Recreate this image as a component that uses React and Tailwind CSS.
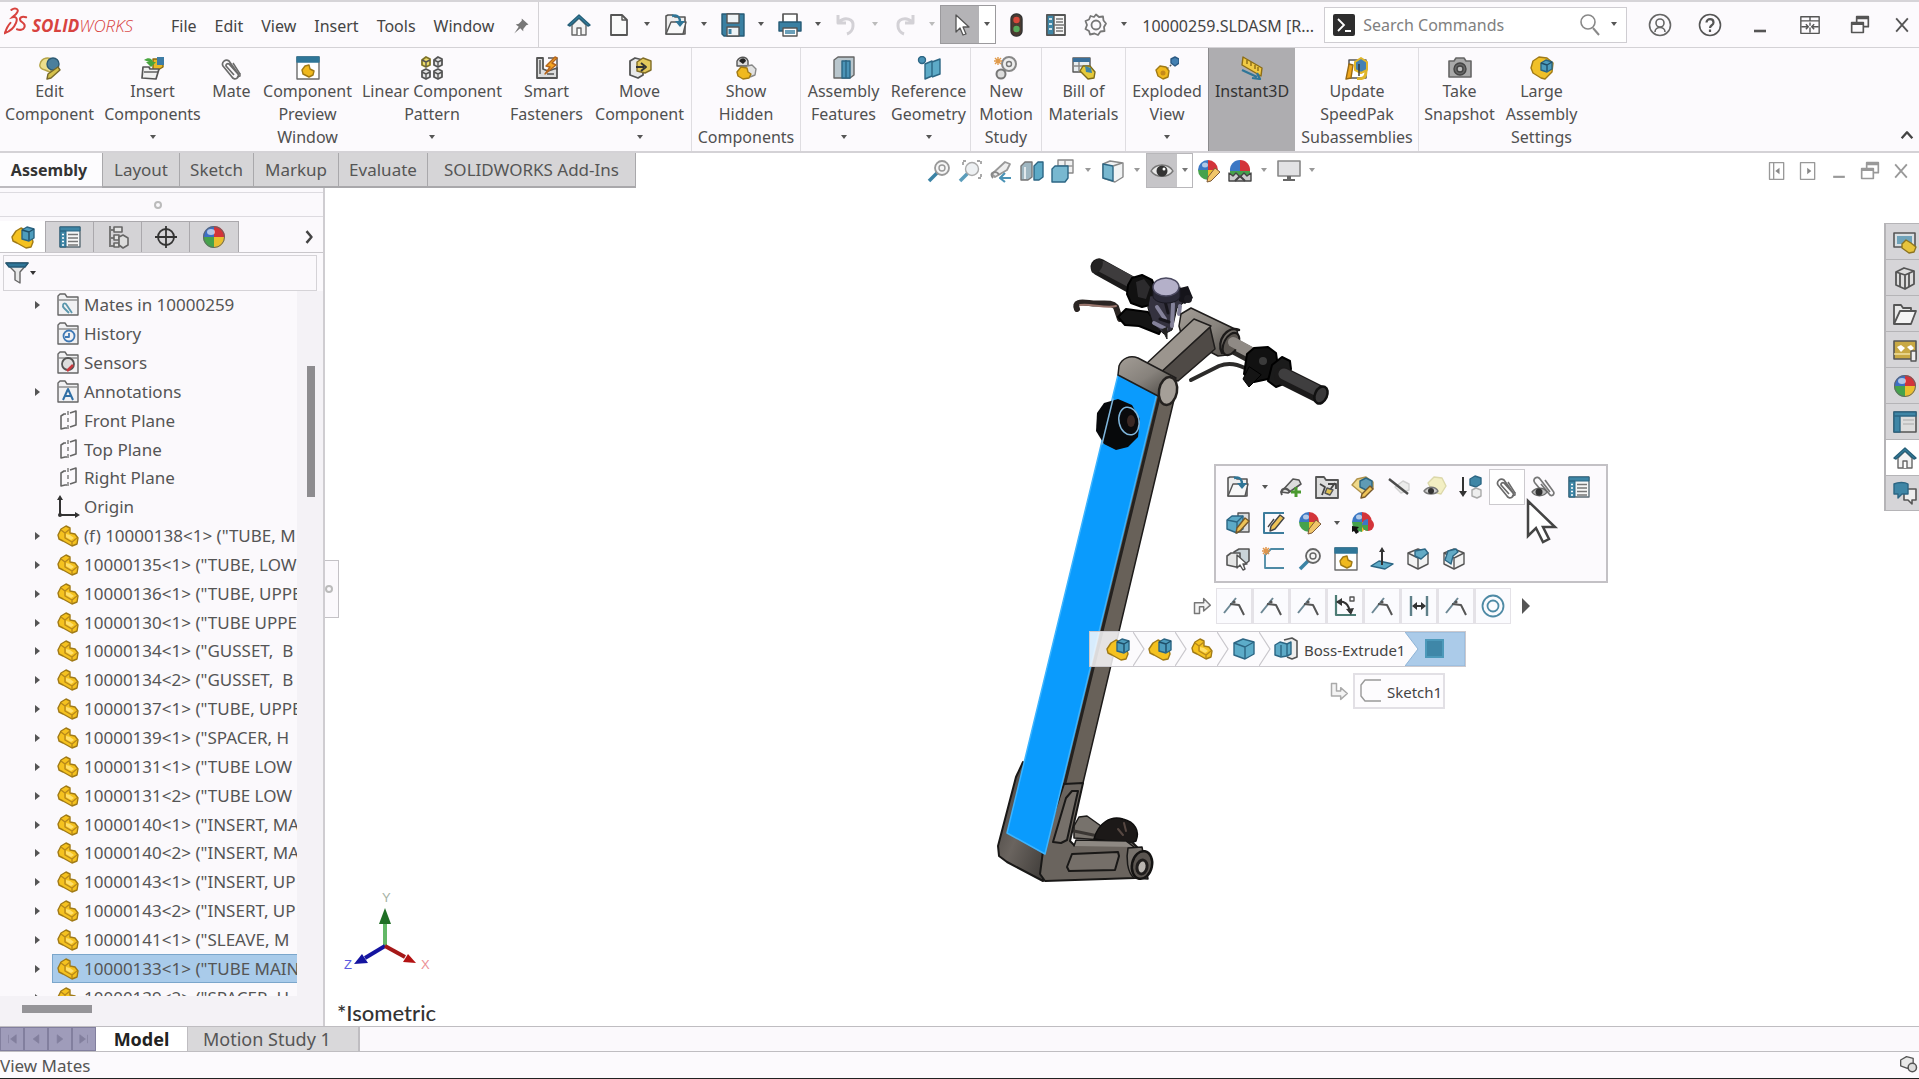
import React from "react";

/* ---------- icon drawing helpers ---------- */

const Svg = ({ className = "size-6", children }) => (
  <svg viewBox="0 0 24 24" className={`${className} shrink-0`} fill="none" stroke="#555" strokeWidth="1.4" strokeLinejoin="round" aria-hidden="true">
    {children}
  </svg>
);

const Part = ({ className }) => (
  <Svg className={className}>
    <path d="M2 11 5 5l5-3 4 2v5l5 1 3 4-1 6-5 2-9-5-4-2z" fill="#f5c21f" stroke="#a07a16" />
    <path d="m5 6 4 3 5-4M9 9v5l7 4 5-4M16 18v3" stroke="#b8891a" />
    <path d="m10 10 4 1 4 3-3 2-5-3z" fill="#ffe06a" stroke="none" />
  </Svg>
);

const Asm = ({ className }) => (
  <Svg className={className}>
    <path d="M1 12 5 6l5-3 4 2 1 6 6 2 1 4-2 5-5 1-9-5-4-2z" fill="#f5c21f" stroke="#a07a16" />
    <path d="m11 5 5-3 7 2v9l-5 3-7-2z" fill="#4e9dbd" stroke="#2b6583" />
    <path d="m11 5 7 2 5-3M18 7v8" stroke="#1f4f69" />
  </Svg>
);

const Clip = ({ className }) => (
  <Svg className={className}>
    <path d="M19 19 9 5a4 4 0 0 0-6 5l9 11a3 3 0 0 0 6-3L9 8a2 2 0 0 0-3 2l8 9" stroke="#6b6b6b" strokeWidth="1.7" />
    <path d="m20 18-7-11M17 21l3-1v-3" stroke="#6b6b6b" strokeWidth="1.5" />
  </Svg>
);

const Home = ({ className }) => (
  <Svg className={className}>
    <path d="M5 12v10h14V12L12 5z" fill="#f3f3f3" stroke="#666" />
    <path d="M10 22v-7h4v7" fill="#fff" stroke="#666" />
    <path d="M1 12 12 2l11 10-2 1-9-8-9 8z" fill="#3583a3" stroke="#265f78" />
  </Svg>
);

const Ball = ({ className }) => (
  <Svg className={className}>
    <g stroke="none">
      <path d="M12 12V1A11 11 0 0 0 1 12z" fill="#3c6fc4" />
      <path d="M12 12V1a11 11 0 0 1 11 11z" fill="#d3343a" />
      <path d="M12 12H1a11 11 0 0 0 11 11z" fill="#46a24c" />
      <path d="M12 12h11a11 11 0 0 1-11 11z" fill="#eabf2e" />
      <ellipse cx="9" cy="7" rx="4" ry="3" fill="#fff" opacity=".6" />
    </g>
    <circle cx="12" cy="12" r="10.5" stroke="#666" strokeWidth="1" />
  </Svg>
);

const BallPencil = ({ className, dark }) => (
  <Svg className={className}>
    <g stroke="none">
      <path d="M11 11V1A10 10 0 0 0 1 11z" fill="#3c78c4" />
      <path d="M11 11V1a10 10 0 0 1 10 10z" fill="#d3343a" />
      <path d="M11 11H1a10 10 0 0 0 10 10z" fill="#46a24c" />
      <path d="M11 11h10l-10 10z" fill="#eabf2e" />
      <ellipse cx="8" cy="6" rx="3" ry="2.5" fill="#fff" opacity=".6" />
    </g>
    {dark ? (
      <g stroke="none">
        <circle cx="17" cy="14" r="6" fill="#d3343a" />
        <path d="M17 14v-6a6 6 0 0 0-6 6z" fill="#3c78c4" />
        <path d="M17 14v6a6 6 0 0 1-6-6z" fill="#46a24c" />
        <path d="m1 15 7 1-2 2 2 3-3 2-2-3-2 1z" fill="#111" />
      </g>
    ) : (
      <path d="m18 9 5 4-9 9-4 1 1-5z" fill="#f1c66a" stroke="#7d5a3a" strokeWidth="1" />
    )}
  </Svg>
);

const List = ({ className }) => (
  <Svg className={className}>
    <path d="M2 2h20v20H2z" fill="#f7f7f7" stroke="#5b6b74" />
    <path d="M2 2h20v4H2zM2 6h6v16H2z" fill="#3f86a6" stroke="#2c6684" strokeWidth="1" />
    <path d="M10 9.500h10M10 13h10M10 16.500h10M10 20h10" stroke="#777" />
    <path d="M4 9.500h2M4 13h2M4 16.500h2M4 20h2" stroke="#fff" />
  </Svg>
);

const WinPart = ({ className }) => (
  <Svg className={className}>
    <path d="M1 1h22v22H1z" fill="#fff" stroke="#6b6b6b" />
    <path d="M1 1h22v5H1z" fill="#2f7698" stroke="#2f7698" />
    <path d="m6 14 3-4 4-1 1 4 4 2-1 4-4 2-6-3z" fill="#f0b91e" stroke="#a07a16" />
  </Svg>
);

const Folder = ({ children }) => (
  <Svg className="size-6">
    <path d="M2 22V3l2-2h5l2 3h11v18z" fill="#f1f1f3" stroke="#666" />
    <path d="M2 7h20" stroke="#888" />
    {children}
  </Svg>
);

const Plane = () => (
  <Svg className="size-6">
    <path d="M10 5H8L5 7v13l4-1h2M14 4l6-2v14l-6 2" stroke="#666" strokeWidth="1.600" />
    <path d="M12 2v19" stroke="#777" strokeDasharray="4 3" />
  </Svg>
);

const Open = ({ className }) => (
  <Svg className={className}>
    <path d="M2 21V3l2-1h5l2 2h10v17z" fill="#eee" strokeWidth="1.600" />
    <path d="m2 21 5-12h15l-3 12z" fill="#f8f8f8" />
    <path d="M8 3c6-2 8 2 8 6" stroke="#2f7698" strokeWidth="2.400" />
    <path d="m11 8 10 0-5 6z" fill="#2f7698" stroke="none" />
  </Svg>
);

const MateLines = () => (
  <Svg className="size-6">
    <path d="m2 19 12-15" stroke="#6b8794" strokeWidth="2" />
    <path d="m8 10 9 1 5 10" stroke="#555" strokeWidth="2" />
    <circle cx="12" cy="8" r="1.600" fill="#555" stroke="none" />
  </Svg>
);

const Cube = ({ className, face }) => (
  <Svg className={className}>
    <path d="m2 6 10-4 10 4v11l-10 5-10-5z" fill="#f3f3f3" stroke="#555" />
    <path d="m2 6 10 5 10-5M12 11v11" />
    {face === "top" ? <path d="m9 4 10-2 3 4-7 6-6-3z" fill="#62aac5" stroke="#2c6684" /> : <path d="m3 13 3-9 8-2 2 3-5 4-2 8z" fill="#62aac5" stroke="#2c6684" />}
  </Svg>
);

const BlueCube = () => (
  <Svg className="size-6">
    <path d="m2 6 9-4 11 3v12l-9 5-11-4z" fill="#5cacc9" stroke="#2c6684" />
    <path d="m2 6 11 4 9-5M13 10v12" stroke="#2c6684" />
  </Svg>
);

const Magnifier = ({ className, tone = "#666" }) => (
  <Svg className={className}>
    <path d="m2 22 8-8" stroke="#3b83a5" strokeWidth="3.500" />
    <circle cx="15" cy="9" r="7" fill="#f6f6f6" stroke={tone} strokeWidth="1.800" />
    <circle cx="15" cy="9" r="3" stroke={tone} />
  </Svg>
);

const Caret = ({ className = "", tone = "#555" }) => (
  <svg viewBox="0 0 8 5" className={`w-2 ${className}`} aria-hidden="true">
    <path d="M1 0h6L4 4z" fill={tone} />
  </svg>
);

const Restore = ({ tone = "#555" }) => (
  <Svg className="size-5">
    <path d="M8 8V2h14v12h-6M2 9h14v12H2zM8 4h14M2 11h14" stroke={tone} strokeWidth="2" />
  </Svg>
);

const Close = ({ tone = "#555" }) => (
  <Svg className="size-5">
    <path d="m5 4 14 16M19 4 5 20" stroke={tone} strokeWidth="2.200" />
  </Svg>
);

/* ---------- title bar ---------- */

const Logo = () => (
  <div className="flex w-[158px] shrink-0 items-center pl-1 text-[#d8433f]" aria-label="SOLIDWORKS">
    <svg viewBox="0 0 26 30" className="mb-2 h-7 w-6" fill="none" stroke="#d8433f" strokeWidth="2.200" strokeLinecap="round" aria-hidden="true">
      <path d="M8 3c4-3 9-1 6 3-1 2-4 4-5 5 4-1 6 1 4 6-2 5-6 9-12 11 2-6 4-9 6-11" />
      <path d="M24 11c-5-2-8 1-6 4 2 2 6 3 4 7-1 3-5 3-8 2" />
    </svg>
    <span className="ml-1 pt-0.5 font-['Open_Sans',sans-serif] text-[17px] italic leading-6">
      <b>SOLID</b><span className="font-light">WORKS</span>
    </span>
  </div>
);

const Tool = ({ label, width = "w-10", children }) => (
  <button type="button" aria-label={label} className={`flex ${width} shrink-0 items-center justify-center self-stretch`}>
    {children}
  </button>
);

const Drop = ({ label, tone }) => (
  <button type="button" aria-label={`${label} options`} className="flex w-4 shrink-0 items-center justify-center self-stretch">
    <Caret tone={tone} />
  </button>
);

const QUICK = [
  ["New", <Svg><path d="M4 2h11l5 5v15H4z" fill="#fafafa" strokeWidth="1.800" /><path d="M15 2v5h5" /></Svg>],
  ["Open", <Open />],
  ["Save", <Svg><path d="M1 1h22v22H3l-2-2z" fill="#3a80a2" stroke="#265a75" /><path d="M6 1h12v9H6zM6 14h12v9H6z" fill="#eef3f6" stroke="#555" /><path d="M9 16v5" stroke="#3a80a2" strokeWidth="3" /></Svg>],
  ["Print", <Svg><path d="M5 1h14v9H5z" fill="#fff" strokeWidth="1.700" /><path d="M1 9h22v9H1z" fill="#3a80a2" stroke="#265a75" /><path d="M5 15h14v8H5z" fill="#fff" /><path d="M7 18h10M7 20h10" stroke="#3a80a2" /></Svg>],
  ["Undo", <Svg><path d="M3 2v8h8M4 9c6-6 15-3 14 4 0 4-3 7-6 8" stroke="#d3d1d6" strokeWidth="3" /></Svg>, "#bbb"],
  ["Redo", <Svg><path d="M21 2v8h-8M20 9C14 3 5 6 6 13c0 4 3 7 6 8" stroke="#d3d1d6" strokeWidth="3" /></Svg>, "#bbb"],
];

const TitleBar = () => (
  <header className="flex h-12 shrink-0 items-center overflow-hidden border-b border-t-2 border-b-[#d4d2d6] border-t-[#d6d4d8] bg-[#fcfafd]">
    <Logo />
    <nav className="flex shrink-0 items-center gap-[18px] pl-[13px] pt-0.5 text-base text-[#444]">
      {["File", "Edit", "View", "Insert", "Tools", "Window"].map((m) => (
        <button type="button" key={m}>{m}</button>
      ))}
      <button type="button" aria-label="Pin menu">
        <Svg className="size-[18px]"><path d="m13 2 9 8-3 1-4 5v3l-4-4-8 7 6-9-4-3 4-1 4-4z" fill="#777" stroke="none" /></Svg>
      </button>
    </nav>
    <div className="ml-2 flex shrink-0 items-center self-stretch border-l border-[#d4d2d6] pl-5">
      <Tool label="Home"><Home className="size-6" /></Tool>
      <div className="flex items-center gap-px self-stretch">
        {QUICK.map(([label, icon, tone]) => (
          <div key={label} className="flex items-center self-stretch">
            <Tool label={label}>{icon}</Tool>
            <Drop label={label} tone={tone} />
          </div>
        ))}
      </div>
      <div className="my-[3px] flex self-stretch border border-[#9b9a9d] bg-white">
        <div className="flex bg-[#b4b3b6]">
          <Tool label="Select" width="w-[38px]">
            <Svg><path d="M8 2v17l4-4 3 7 3-1-3-7h6z" fill="#fff" stroke="#555" strokeWidth="1.300" /></Svg>
          </Tool>
        </div>
        <Drop label="Select" />
      </div>
      <Tool label="Rebuild"><Svg><rect x="7" y="1" width="11" height="22" rx="5" fill="#4a3a30" stroke="#333" /><circle cx="12.500" cy="7" r="3.200" fill="#d8483a" stroke="none" /><circle cx="12.500" cy="16" r="3.200" fill="#57a95a" stroke="none" /></Svg></Tool>
      <Tool label="File properties"><Svg><path d="M3 2h18v20H3z" fill="#f7f7f7" strokeWidth="1.800" /><path d="M3 2h7v20H3z" fill="#3f86a6" /><path d="M5 6h3M5 11h3M5 16h3" stroke="#fff" /><path d="M12 6h7M12 9h7M10 12h11M12 15h7M12 18h7" stroke="#777" /></Svg></Tool>
      <Tool label="Options"><Svg><path d="M12 1.500 15 4l4-.5.500 4 2.500 3-2 3.500.5 4-4 .5-2.500 3.500-3.500-1.500L6 21.500 5 18l-3.500-2L3 12 1.500 8 5 6.500 6.500 3 10 4z" stroke="#777" strokeWidth="1.800" /><circle cx="12" cy="12" r="4.500" stroke="#777" strokeWidth="1.800" /></Svg></Tool>
      <Drop label="Options" />
    </div>
    <span className="ml-2.5 w-[182px] shrink-0 whitespace-nowrap pt-0.5 text-base text-[#444]">10000259.SLDASM [R...</span>
    <label className="flex h-9 w-[303px] shrink items-center border border-[#cfcdd2] bg-white pl-2 pr-1">
      <svg viewBox="0 0 22 22" className="size-[22px] shrink-0" aria-hidden="true">
        <rect width="22" height="22" rx="2" fill="#2e2e2e" />
        <path d="m5 5 6 6-6 6M12 17h6" fill="none" stroke="#fff" strokeWidth="1.800" />
      </svg>
      <input type="text" aria-label="Search Commands" placeholder="Search Commands" className="ml-2 min-w-0 flex-1 bg-transparent text-base text-[#444] outline-none placeholder:text-[#808080]" />
      <Svg className="size-6"><circle cx="12" cy="9" r="7" stroke="#888" strokeWidth="1.600" /><path d="m17 15 6 7" stroke="#888" strokeWidth="2" /></Svg>
      <span className="ml-1.5 flex w-4 justify-center"><Caret /></span>
    </label>
    <div className="ml-auto flex shrink-0 self-stretch">
      <Tool label="Account" width="w-[50px]"><Svg><circle cx="12" cy="12" r="10.500" stroke="#666" strokeWidth="1.600" /><circle cx="12" cy="10" r="4" stroke="#666" strokeWidth="1.600" /><path d="M7 19c0-6 10-6 10 0" stroke="#666" strokeWidth="1.600" /></Svg></Tool>
      <Tool label="Help" width="w-[50px]"><Svg><circle cx="12" cy="12" r="10.500" stroke="#555" strokeWidth="1.600" /><path d="M8.500 9.500c0-4.500 7-4.500 7 0 0 3-3.500 2.500-3.500 5.500M12 16.500V19" stroke="#555" strokeWidth="2.200" /></Svg></Tool>
      <Tool label="Minimize" width="w-[50px]"><Svg><path d="M6 18h12" stroke="#555" strokeWidth="2.600" /></Svg></Tool>
      <Tool label="Span displays" width="w-[50px]"><Svg className="size-5"><path d="M1 2h22v20H1zM1 7h22M12 2v5M12 9v4M12 15v6M2 14h8l-3-3M22 14h-8l3-3M7 17l3-3M17 17l-3-3" stroke="#555" strokeWidth="1.700" /></Svg></Tool>
      <Tool label="Restore" width="w-[50px]"><Restore /></Tool>
      <Tool label="Close" width="w-[34px]"><Close /></Tool>
    </div>
  </header>
);

/* ---------- ribbon ---------- */

const RIBBON = [
  { w: "w-[98px]", lines: ["Edit", "Component"], icon: <Svg><path d="M2 8c2-7 9-7 13-4l-4 5 3 8-7-3c-4-1-6-3-5-6z" fill="#ecdf8c" stroke="#b5a448" /><circle cx="15" cy="8" r="6" fill="#4b7f9c" stroke="#2c5a74" /><path d="m20 11 2 3-9 8-4 1 1-5z" fill="#d5c14b" stroke="#77682a" /></Svg> },
  { w: "w-[108px]", lines: ["Insert", "Components"], drop: true, icon: <Svg><path d="M12 3h10v8l-5 3h-5z" fill="#e9b927" stroke="#8a6a10" /><path d="M16 1h7v8h-7z" fill="#3d7ca5" stroke="none" /><path d="M3 4c4-3 8-2 9 2h3l-5 5-5-5h3" fill="#49a63f" stroke="none" /><path d="m1 22 1-11h6l1 2h9l-3 10z" fill="#f1f1f1" strokeWidth="1.700" /><path d="M3 16h14" /></Svg> },
  { w: "w-[50px]", lines: ["Mate"], icon: <Clip /> },
  { w: "w-[102px]", lines: ["Component", "Preview", "Window"], icon: <WinPart /> },
  { w: "w-[147px]", lines: ["Linear Component", "Pattern"], drop: true, icon: <Svg><path d="m2 4 4-3 4 2v6l-4 2-4-2z" fill="#eddc6b" stroke="#807428" strokeWidth="1.800" /><path d="m14 4 4-3 4 2v6l-4 2-4-2zM2 15l4-2 4 2v6l-4 2-4-2zM14 15l4-2 4 2v6l-4 2-4-2z" fill="#e5e5e5" strokeWidth="1.800" /><path d="m2 4 4 2 4-2M6 6v5M14 4l4 2 4-2M18 6v5M2 16l4 2 4-2M6 18v5M14 16l4 2 4-2M18 18v5" /></Svg> },
  { w: "w-[82px]", lines: ["Smart", "Fasteners"], icon: <Svg><path d="M2 2h6v11l5 2 9-3v10H2z" fill="#ddd" strokeWidth="1.800" /><path d="M13 2h9v12" strokeWidth="1.500" /><path d="M5 4v14M12 18h7" /><path d="m20 1-9 9 4 1-5 7 11-9-4-2 5-5z" fill="#f5a623" stroke="#b5651d" /></Svg> },
  { w: "w-[104px]", lines: ["Move", "Component"], drop: true, icon: <Svg><path d="m2 5 5-3 8 2v15l-5 3-8-3z" fill="#e9e9e9" strokeWidth="1.800" /><path d="m9 6 6-4 8 3v9l-6 3-8-2z" fill="#e3c85c" stroke="#806d28" /><path d="M8 11h8M13 7l5 4-5 4" stroke="#333" strokeWidth="2" /></Svg> },
  { w: "w-[109px]", sep: true, lines: ["Show", "Hidden", "Components"], icon: <Svg><path d="M3 5c3-5 9-5 11 0v5H3z" fill="#ddd" /><path d="M5 5c3-4 6-3 7 0l-3 3z" fill="#222" stroke="none" /><path d="m13 10 5-1 4 4-1 6-5 2" fill="#e2e2e2" stroke="#888" /><path d="m3 16 4-5 6 1 1 4 3 2-2 4-6 1-5-3z" fill="#f0b91e" stroke="#a07a16" /></Svg> },
  { w: "w-[86px]", sep: true, lines: ["Assembly", "Features"], drop: true, icon: <Svg><path d="m2 4 4-3h16v18l-4 3H2z" fill="#b9c6cd" stroke="#666" /><path d="M10 22V5h8v17z" fill="#4b93b6" stroke="#2c6684" /><path d="M14 4v18" stroke="#2c6684" /></Svg> },
  { w: "w-[84px]", lines: ["Reference", "Geometry"], drop: true, icon: <Svg><circle cx="5" cy="4" r="3.500" fill="#4b93b6" stroke="#2c6684" /><path d="m8 8 7-3v15l-7 3zM15 6l8-3v15l-8 3" fill="#5daac7" stroke="#2c6684" /></Svg> },
  { w: "w-[71px]", sep: true, lines: ["New", "Motion", "Study"], icon: <Svg><circle cx="15" cy="8" r="7" stroke="#888" strokeWidth="2" fill="#eee" /><circle cx="15" cy="8" r="2.500" stroke="#777" /><circle cx="7" cy="18" r="4.500" stroke="#777" strokeWidth="2" fill="#ddd" /><path d="M4 1v8M0 5h8M1 2l6 6M7 2 1 8" stroke="#e09a4b" /></Svg> },
  { w: "w-[84px]", sep: true, lines: ["Bill of", "Materials"], icon: <Svg><path d="M1 2h17v14H1z" fill="#e8edf0" /><path d="M1 2h17v4H1z" fill="#3a6f9a" stroke="none" /><path d="M1 10h17M7 6v10" stroke="#888" /><path d="m8 15 3-5h7l5 6-1 6-6 1z" fill="#e5c93a" stroke="#7d6b1a" /><path d="m13 10 6 2 1 5-6-1z" fill="#3f86a6" stroke="none" /></Svg> },
  { w: "w-[83px]", sep: true, lines: ["Exploded", "View"], drop: true, icon: <Svg><path d="m16 3 4-2 4 2v4l-4 3-4-3z" fill="#4480b2" stroke="#2c5a84" /><path d="m12 13 5-5" strokeDasharray="2 2" /><path d="m1 14 4-4 6 1 3 4-1 6-5 2-5-3z" fill="#f0b91e" stroke="#a07a16" /><circle cx="8" cy="17" r="2.500" fill="#c58a1b" stroke="none" /></Svg> },
  { w: "w-[87px]", active: true, lines: ["Instant3D"], icon: <Svg><path d="m3 1 19 11-1 8L2 9z" fill="#f1ca45" stroke="#8c6c16" /><path d="M7 4v4M11 6v4M15 9v4M18 11v4" stroke="#8c6c16" /><path d="m2 14 15 7M12 22l8 1-3-6" stroke="#2f7698" strokeWidth="2.200" /></Svg> },
  { w: "w-[123px]", lines: ["Update", "SpeedPak", "Subassemblies"], icon: <Svg><path d="M4 4h17v18H4z" fill="#fff" strokeWidth="1.500" /><path d="m10 6 6-4 6 4v8l-6 3-6-3z" fill="#4480b2" stroke="#e0b62a" strokeWidth="2" /><path d="M1 23 4 8l4 1-2 13z" fill="#f0a71e" stroke="#9a6a10" /><path d="M12 23c8 0 9-3 9-8" stroke="#e0b62a" strokeWidth="3" /><path d="M14 8v12" stroke="#333" /></Svg> },
  { w: "w-[82px]", sep: true, lines: ["Take", "Snapshot"], icon: <Svg><path d="M1 5h5l2-3h8l2 3h5v16H1z" fill="#a8a8a8" stroke="#666" strokeWidth="1.600" /><circle cx="12" cy="13" r="6" fill="#666" stroke="#444" /><circle cx="12" cy="13" r="3" fill="#bbb" stroke="#444" /></Svg> },
  { w: "w-[82px]", lines: ["Large", "Assembly", "Settings"], icon: <Svg><path d="m1 12 2-7 6-4 8 1 6 5-1 9-7 7-4-1-8-5z" fill="#f0c028" stroke="#a07a16" /><path d="m11 7 5-3 6 2v7l-5 3-6-2z" fill="#4e9dbd" stroke="#2b6583" /><path d="m11 7 6 2 5-3M17 9v6" stroke="#1f4f69" /></Svg> },
];

const Ribbon = () => (
  <div className="flex h-[105px] shrink-0 overflow-hidden border-b-2 border-[#d4d2d6] bg-[#fcfafd]">
    {RIBBON.map((r) => (
      <button
        type="button"
        key={r.lines.join(" ")}
        className={`${r.w} flex shrink-0 flex-col items-center border-l pt-2 text-base leading-[23px] ${
          r.active ? "border-[#8b8a8d] bg-[#aeadb0] text-[#333]" : r.sep ? "border-[#dfdde1] text-[#505050]" : "border-transparent text-[#505050]"
        }`}
      >
        <span className="flex h-6 items-start">{r.icon}</span>
        {r.lines.map((l) => (
          <span key={l} className="whitespace-nowrap">{l}</span>
        ))}
        {r.drop && <span className="flex h-[23px] items-center"><Caret /></span>}
      </button>
    ))}
    <button type="button" aria-label="Collapse ribbon" className="ml-auto flex shrink-0 items-end pb-2 pr-1">
      <Svg className="size-4"><path d="m4 17 8-9 8 9" stroke="#444" strokeWidth="3.500" /></Svg>
    </button>
  </div>
);

/* ---------- command tabs and heads-up view toolbar ---------- */

const TABS = [
  ["Layout", "w-[77px]"],
  ["Sketch", "w-[74px]"],
  ["Markup", "w-[85px]"],
  ["Evaluate", "w-[89px]"],
  ["SOLIDWORKS Add-Ins", "w-[209px]"],
];

const TabRow = () => (
  <div className="flex h-[35px] shrink-0 bg-white">
    <div role="tablist" className="flex shrink-0 text-[17px] text-[#555]">
      <button type="button" role="tab" aria-selected="true" className="w-[102px] border-b-2 border-[#bdbbbf] bg-[#fdfcfe] pr-1 text-center text-base font-bold text-[#333]">Assembly</button>
      {TABS.map(([t, w]) => (
        <button type="button" role="tab" aria-selected="false" key={t} className={`${w} whitespace-nowrap border-b-2 border-l border-[#a9a8ab] bg-[#d6d5d7] text-center last:border-r`}>
          {t}
        </button>
      ))}
    </div>
    <div className="ml-auto flex shrink-0 items-center">
      <Tool label="Zoom to fit" width="w-[31px]"><Magnifier tone="#999" /></Tool>
      <Tool label="Zoom to area" width="w-[31px]"><Svg><path d="m2 22 8-8" stroke="#5b9dbb" strokeWidth="3.500" /><circle cx="14" cy="10" r="6.500" fill="#eef1f3" stroke="#aaa" /><path d="M5 6V2h4M19 2h4v4M23 15v4h-4" stroke="#888" strokeDasharray="3 1" /></Svg></Tool>
      <Tool label="Previous view" width="w-[31px]"><Svg><path d="m3 15 13-12 5 2-3 6-12 7z" fill="#eee" stroke="#999" strokeWidth="1.800" /><path d="M4 19c-5-6 4-8 6-3" stroke="#888" strokeWidth="2" /><path d="M22 19H12M16 14l-5 5 5 4" stroke="#4b93b6" strokeWidth="2.200" /></Svg></Tool>
      <Tool label="Section view" width="w-[31px]"><Svg><path d="m1 7 4-4h7v15l-4 3H1z" fill="#9fb7c2" stroke="#777" /><path d="m14 7 4-4h5v15l-4 3h-5z" fill="#5daac7" stroke="#2c6684" /><path d="M5 8v12" stroke="#fff" /></Svg></Tool>
      <Tool label="View orientation" width="w-[31px]"><Svg><path d="M7 1h15v13H7z" fill="#f1f1f1" stroke="#888" /><path d="M14 1v13M7 7h15" stroke="#999" /><path d="m1 10 3-3h13v12l-3 4H1z" fill="#78b8d0" stroke="#2c6684" /></Svg></Tool>
      <span className="flex w-5 justify-center"><Caret tone="#999" /></span>
      <Tool label="Display style" width="w-[30px]"><Svg><path d="m2 5 7-3 13 2v14l-8 5-12-4z" fill="#f1f3f4" stroke="#888" /><path d="m2 5 10 2v15L2 19z" fill="#78b8d0" stroke="#2c6684" /><path d="m12 7 9-3" stroke="#888" /></Svg></Tool>
      <span className="flex w-[18px] justify-center"><Caret tone="#999" /></span>
      <div className="flex self-stretch border border-[#b8b7ba]">
        <div className="flex bg-[#c6c5c8]">
          <Tool label="Hide/show items" width="w-[30px]"><Svg><path d="M1 12c5-8 17-8 22 0-5 7-17 7-22 0z" fill="#e9e9e9" stroke="#777" /><circle cx="12" cy="12" r="5.500" fill="#333" stroke="none" /><circle cx="14" cy="10" r="1.500" fill="#fff" stroke="none" /></Svg></Tool>
        </div>
        <span className="flex w-[15px] items-center justify-center bg-white"><Caret tone="#777" /></span>
      </div>
      <Tool label="Edit appearance" width="w-8"><BallPencil /></Tool>
      <Tool label="Apply scene" width="w-[30px]"><Svg><g stroke="none"><path d="M12 12V1A10 10 0 0 0 2 12z" fill="#3c78c4" /><path d="M12 12V1a10 10 0 0 1 10 11z" fill="#d3343a" /><path d="M2 12h20v4H2z" fill="#46a24c" /></g><path d="M1 22V14l4 3 3-3 4 4 4-4 3 3 4-3v8z" fill="#ccc" stroke="#444" /><path d="m7 22 5-5 5 5" stroke="#444" strokeWidth="2" /></Svg></Tool>
      <span className="flex w-[18px] justify-center"><Caret tone="#999" /></span>
      <Tool label="View settings" width="w-8"><Svg><path d="M1 2h22v15H1z" fill="#e2e2e4" stroke="#888" strokeWidth="1.600" /><path d="M10 17h4v3h4v2H6v-2h4z" fill="#666" stroke="none" /></Svg></Tool>
      <span className="flex w-[14px] justify-center"><Caret tone="#999" /></span>
    </div>
    <div className="ml-[442px] flex shrink-0 items-center pr-[3px]">
      <Tool label="Previous pane" width="w-[31px]"><Svg className="size-5"><path d="M3 2h17v20H3zM8 2v20" stroke="#999" strokeWidth="1.600" /><path d="m15 8-5 4 5 4z" fill="#888" stroke="none" /></Svg></Tool>
      <Tool label="Next pane" width="w-[31px]"><Svg className="size-5"><path d="M3 2h17v20H3z" stroke="#999" strokeWidth="1.600" /><path d="m11 8 5 4-5 4z" fill="#888" stroke="none" /></Svg></Tool>
      <Tool label="Minimize document" width="w-[31px]"><Svg className="size-5"><path d="M5 19h14" stroke="#999" strokeWidth="2.600" /></Svg></Tool>
      <Tool label="Restore document" width="w-[31px]"><Restore tone="#999" /></Tool>
      <Tool label="Close document" width="w-[31px]"><Close tone="#999" /></Tool>
    </div>
  </div>
);

/* ---------- feature tree ---------- */

const TREE = [
  ["Mates in 10000259", <Folder><path d="m16 20-6-9c-3-2-4 2-2 4l5 5" stroke="#5a97ad" strokeWidth="1.800" /></Folder>, true],
  ["History", <Folder><circle cx="13" cy="14" r="5.500" stroke="#3f79b5" strokeWidth="1.800" /><path d="M13 11v4h-4" stroke="#3f79b5" strokeWidth="1.800" /></Folder>],
  ["Sensors", <Folder><circle cx="12" cy="13" r="6" fill="#ddd" stroke="#555" strokeWidth="1.800" /><path d="m11 20 6-6" stroke="#c9393f" strokeWidth="2.500" /></Folder>],
  ["Annotations", <Folder><path d="m7 20 5-11 5 11M9 16h6" stroke="#2f6fa5" strokeWidth="2" /></Folder>, true],
  ["Front Plane", <Plane />],
  ["Top Plane", <Plane />],
  ["Right Plane", <Plane />],
  ["Origin", <Svg><path d="M4 3v17h17" stroke="#333" strokeWidth="2" /><path d="m1 5 3-5 3 5zM19 17l5 3-5 3z" fill="#333" stroke="none" /><circle cx="4" cy="20" r="2" fill="#333" stroke="none" /></Svg>],
  ...[
    '(f) 10000138<1> ("TUBE, M',
    '10000135<1> ("TUBE, LOW',
    '10000136<1> ("TUBE, UPPE',
    '10000130<1> ("TUBE UPPE',
    '10000134<1> ("GUSSET,\u00a0 B',
    '10000134<2> ("GUSSET,\u00a0 B',
    '10000137<1> ("TUBE, UPPE',
    '10000139<1> ("SPACER, H',
    '10000131<1> ("TUBE LOW',
    '10000131<2> ("TUBE LOW',
    '10000140<1> ("INSERT, MA',
    '10000140<2> ("INSERT, MA',
    '10000143<1> ("INSERT, UP',
    '10000143<2> ("INSERT, UP',
    '10000141<1> ("SLEAVE, M',
    '10000133<1> ("TUBE MAIN',
    '10000139<2> ("SPACER, H',
  ].map((t) => [t, <Part className="size-6" />, true]),
];

const PANEL_TABS = [
  ["PropertyManager", <List />],
  ["ConfigurationManager", <Svg><path d="M4 1v21M4 5h5M4 13h5M4 21h5" stroke="#777" strokeWidth="2" /><path d="M8 2h8v5H8zM8 10h5v5H8zM8 18h5v4H8z" fill="#e4e4e4" stroke="#666" strokeWidth="1.600" /><path d="m13 12 4-2 5 3v7l-5 3-4-3z" fill="#ddd" stroke="#666" strokeWidth="1.600" /></Svg>],
  ["DimXpertManager", <Svg><circle cx="12" cy="12" r="8" stroke="#333" strokeWidth="1.800" /><path d="M12 1v22M1 12h22" stroke="#333" strokeWidth="1.800" /></Svg>],
  ["DisplayManager", <Ball />],
];

const FeaturePanel = () => (
  <aside className="flex w-[325px] shrink-0 flex-col overflow-hidden border-r-2 border-[#cfcdd1] bg-[#fbf9fc]">
    <div className="mt-1 flex h-[25px] shrink-0 items-center justify-center border-y border-[#dddbe0] pr-2">
      <span className="size-2 rounded-full border-2 border-[#bbb]" />
    </div>
    <div className="mt-1 flex h-8 shrink-0 border-b border-[#c9c7cb]">
      <div role="tablist" className="flex">
        <button type="button" role="tab" aria-selected="true" aria-label="FeatureManager tree" className="flex w-[45px] items-center justify-center bg-white"><Asm className="size-6" /></button>
        {PANEL_TABS.map(([label, icon]) => (
          <button type="button" role="tab" aria-selected="false" key={label} aria-label={label} className="flex w-12 items-center justify-center border-l border-t border-[#aaa8ac] bg-[#d4d3d6] last:w-[50px] last:border-r">
            {icon}
          </button>
        ))}
      </div>
      <button type="button" aria-label="More tabs" className="ml-auto mr-1">
        <Svg className="size-5"><path d="m9 5 6 7-6 7" stroke="#444" strokeWidth="3" /></Svg>
      </button>
    </div>
    <label className="ml-[3px] mr-1.5 mt-0.5 flex h-9 shrink-0 items-center border border-[#d5d3d7] pl-px">
      <Svg className="size-6"><path d="M1 2h22l-8 9v11l-5-3v-8z" fill="#e8e8e8" stroke="#666" /><path d="M1 2h22l-3 4H4z" fill="#2f7698" stroke="#265a75" /></Svg>
      <Caret tone="#333" />
      <input type="text" aria-label="Filter tree" className="min-w-0 flex-1 bg-transparent text-base outline-none" />
    </label>
    <div className="flex min-h-0 flex-1">
      <div className="min-h-0 flex-1 overflow-hidden">
        <ul className="grid h-[calc(100%+16px)] auto-rows-fr text-[17px] leading-6 text-[#555]">
          {TREE.map(([text, icon, expandable]) => {
            const selected = text.startsWith("10000133");
            return (
              <li key={text} className="flex min-h-0 items-center pl-[33px]">
                <button type="button" aria-label={`Expand ${text}`} disabled={!expandable} className="w-[19px] shrink-0">
                  {expandable && <svg viewBox="0 0 8 8" className="size-2" aria-hidden="true"><path d="M2 0v8l5-4z" fill="#555" /></svg>}
                </button>
                <button type="button" className={`flex h-full min-w-0 flex-1 items-center overflow-hidden whitespace-nowrap border pl-[3px] text-left ${selected ? "border-[#7ba6cb] bg-[#a9cbea]" : "border-transparent"}`}>
                  {icon}
                  <span className="ml-1">{text}</span>
                </button>
              </li>
            );
          })}
        </ul>
      </div>
      <div className="flex w-[26px] shrink-0 flex-col items-center bg-[#f4f2f6] pl-0.5">
        <div className="mt-[75px] h-[131px] w-2 bg-[#8d8c8f]" />
      </div>
    </div>
    <div className="flex h-[30px] shrink-0 items-center bg-[#f4f2f6] pb-1 pl-[22px]">
      <div className="h-2 w-[70px] bg-[#959498]" />
    </div>
  </aside>
);

/* ---------- 3D model ---------- */

const Scooter = () => (
  <svg viewBox="990 245 350 650" className="absolute left-[665px] top-[58px] h-[650px] w-[350px]" strokeLinejoin="round" strokeLinecap="round" aria-label="Scooter assembly" role="img">
    <defs>
      <linearGradient id="tube" x1="0" y1="0" x2="1" y2="1">
        <stop offset="0" stopColor="#a39d96" />
        <stop offset=".5" stopColor="#87827c" />
        <stop offset="1" stopColor="#47433f" />
      </linearGradient>
      <linearGradient id="foot" x1="0" y1="0" x2="1" y2="1">
        <stop offset="0" stopColor="#3f3b38" />
        <stop offset=".5" stopColor="#6a645f" />
        <stop offset="1" stopColor="#3b3835" />
      </linearGradient>
    </defs>
    {/* brake levers */}
    <path d="M1077 308c-3-7 3-7 12-6 12 2 22-2 27 4l4 12" fill="none" stroke="#2b2523" strokeWidth="6" />
    <path d="M1080 304c10-2 26 4 36 1" fill="none" stroke="#9a766d" strokeWidth="2" />
    <path d="m1191 379 28-14c10-4 18-2 26 2" fill="none" stroke="#2c2b2a" strokeWidth="4" />
    {/* left grip and controls */}
    <path d="m1099 266 36 20" stroke="#1b1a1a" strokeWidth="17" />
    <path d="m1103 266 34 18" stroke="#3e3c3d" strokeWidth="12" />
    <ellipse cx="1097" cy="265" rx="5" ry="8" transform="rotate(30 1097 265)" fill="#232222" />
    <path d="m1128 284 4-7 10-3 10 5 5 12-3 12-12 3-11-4-4-9z" fill="#111" stroke="#000" strokeWidth="2" />
    <path d="m1118 316 8-8 22 3 13 18-2 4-20-8-14-1z" fill="#141414" stroke="#000" strokeWidth="2" />
    <path d="m1136 281 8-3 6 8-4 12-8-2z" fill="#2c2b2d" />
    <path d="m1150 295 34-5 3 9-10 8-5 22-8 4-11-10-5-16z" fill="#34323f" stroke="#111" />
    <path d="m1157 306 8 12M1173 303l-1 22M1154 322l12 6M1180 305l-1 8" stroke="#84829a" strokeWidth="4" />
    <path d="m1165 300 3 12M1160 318l9 3" stroke="#17161c" strokeWidth="3" />
    <path d="m1176 288 12-3 5 12-8 6-6-3z" fill="#15141a" />
    <circle cx="1188" cy="298" r="4" fill="#1d1c22" />
    <path d="M1153 286v10c3 8 24 8 27 0v-10" fill="#2b2a38" stroke="#1a1922" />
    <ellipse cx="1166" cy="286" rx="13" ry="9" fill="#b4b0c9" stroke="#4b4960" strokeWidth="1.500" />
    <path d="m1162 328 5 10v-12" fill="#222" stroke="#222" />
    {/* upper handlebar tube */}
    <path d="m1224 340 30 16" stroke="#2c2a28" strokeWidth="16" />
    <path d="m1224 338 30 16" stroke="#8f8a85" strokeWidth="10" />
    <path d="m1179 325 2-12 10-6 46 22 2 12-12 13-9 1-36-19z" fill="url(#tube)" stroke="#1f1d1c" strokeWidth="1.500" />
    <path d="M1222 352c-6-12 5-28 17-23" fill="none" stroke="#1c1a19" strokeWidth="2.500" />
    <ellipse cx="1231" cy="343" rx="7" ry="12" transform="rotate(28 1231 343)" fill="#5a5550" stroke="#1c1a19" strokeWidth="2" />
    <path d="m1233 341 20 11" stroke="#8f8a85" strokeWidth="10" />
    {/* stem */}
    <path d="m1159 373 51-47 5 22-37 32z" fill="#4f4a46" stroke="#1f1d1c" strokeWidth="1.500" />
    <path d="m1145 364 49-46 17 7-52 48z" fill="#9b958e" stroke="#1f1d1c" strokeWidth="1.500" />
    {/* right controls and grip */}
    <path d="m1247 353 7-6 14-1 8 6 2 14-10 12-14 3-10-8z" fill="#111" stroke="#000" strokeWidth="2" />
    <path d="m1249 366-6 12 6 8 12-12z" fill="#151515" stroke="#000" />
    <path d="m1272 364 10-8 8 4 1 8-5 14-10 4-8-6z" fill="#1b1b1b" stroke="#000" strokeWidth="2" />
    <circle cx="1263" cy="360" r="4" fill="#3b3b3b" />
    <path d="m1283 375 36 18" stroke="#1b1a1a" strokeWidth="18" />
    <path d="m1284 373 32 16" stroke="#3f3e3f" strokeWidth="11" />
    <ellipse cx="1321" cy="394" rx="6" ry="9" transform="rotate(25 1321 394)" fill="#3a393a" stroke="#111" strokeWidth="2.500" />
    {/* column side */}
    <path d="m1156 392 21-6-94 396-32 76-14-10z" fill="#686159" stroke="#1d1b1a" strokeWidth="1.500" />
    <path d="m1160 393-95 389-20 72" fill="none" stroke="#24211f" strokeWidth="3" />
    {/* foot: left cheek */}
    <path d="m1023 761-7 15-18 69 1 10 8 6 36 19 4-30z" fill="url(#foot)" stroke="#191817" strokeWidth="2" />
    {/* rear wheel */}
    <path d="m1074 825 5-9 8-1 14 10v14l-27-2z" fill="#77726c" stroke="#1c1a19" strokeWidth="1.500" />
    <path d="m1074 830 24 5" stroke="#3a3633" strokeWidth="3" />
    <path d="M1094 838c4-16 17-24 29-20 12 3 17 12 13 22l-8 3z" fill="#1c1918" stroke="#0e0d0d" strokeWidth="1.500" />
    <path d="m1118 828 5 6M1124 822l2 8" stroke="#574842" strokeWidth="2" />
    {/* foot: right cheek */}
    <path d="m1064 783 19-1-13 58 4 4 58-3 8 8-5 28-90 3-5-7 4-31z" fill="#6a645e" stroke="#191817" strokeWidth="2" />
    <path d="m1074 845 2-6 50 1 8 6" fill="#8e8983" stroke="#191817" strokeWidth="1.500" />
    <path d="m1066 797 6-7h6l-11 49-6 3-8-1z" fill="#76706a" stroke="#191817" strokeWidth="2" />
    <path d="m1072 853 46-2 1 4-4 14-46 1-2-4z" fill="#756f69" stroke="#191817" strokeWidth="2" />
    <path d="m1128 847 14-1 6 32-14-1c-7-6-8-20-6-30z" fill="#77726c" stroke="#191817" strokeWidth="1.500" />
    <ellipse cx="1142" cy="864" rx="10" ry="14" transform="rotate(12 1142 864)" fill="#5a5550" stroke="#151413" strokeWidth="2.500" />
    <ellipse cx="1142" cy="866" rx="5" ry="7" transform="rotate(12 1142 866)" fill="#b9b5b0" stroke="#201e1d" strokeWidth="3" />
    {/* highlighted face */}
    <path d="m1118 374 39 18-112 461-38-21z" fill="#0a9bfd" stroke="#3cb4ff" strokeWidth="1.500" />
    {/* head tube */}
    <path d="m1118 374 1-9c3-8 11-11 19-8l38 20c-2 5-12 10-14 15l-4 3z" fill="url(#tube)" stroke="#1f1d1c" strokeWidth="1.500" />
    <ellipse cx="1168" cy="390" rx="9" ry="14" transform="rotate(10 1168 390)" fill="#a59f98" stroke="#24211f" strokeWidth="2.500" />
    {/* headlamp */}
    <path d="m1104 402 14-4 14 6 8 14-2 18-10 10-12 3-12-6-8-13 1-18z" fill="#07090b" />
    <path d="m1113 398-11 45" stroke="#7fb6dc" strokeWidth="1.500" />
    <ellipse cx="1129" cy="420" rx="10" ry="14" transform="rotate(-12 1129 420)" fill="#0a0a0c" stroke="#7fb6dc" strokeWidth="1.500" />
    <ellipse cx="1131" cy="420" rx="4" ry="6" fill="#3a2824" />
  </svg>
);

const Triad = () => (
  <svg viewBox="0 0 90 84" className="absolute left-[18px] top-[704px] h-[84px] w-[90px]" aria-label="Coordinate triad" role="img">
    <path d="M42 54V28" stroke="#63b867" strokeWidth="4" />
    <path d="m42 16 6 16H36z" fill="#1f6f25" />
    <path d="M42 54 22 66" stroke="#1414a0" strokeWidth="4" />
    <path d="m11 72 8-10 6 9z" fill="#1414a0" />
    <path d="m42 54 20 11" stroke="#a51818" strokeWidth="4" />
    <path d="m73 71-8-9-5 8z" fill="#b31212" />
    <text x="39" y="10" fontSize="13" fill="#a6b3a6" fontFamily="Liberation Sans, sans-serif">Y</text>
    <text x="1" y="77" fontSize="13" fill="#5b5be0" fontFamily="Liberation Sans, sans-serif">Z</text>
    <text x="78" y="77" fontSize="13" fill="#ec8f96" fontFamily="Liberation Sans, sans-serif">X</text>
  </svg>
);

/* ---------- context toolbar ---------- */

const Cell = ({ label, children, boxed }) => (
  <button type="button" aria-label={label} className={`flex size-9 shrink-0 items-center justify-center border ${boxed ? "border-[#cccace] bg-white" : "border-transparent"}`}>
    {children}
  </button>
);

const ContextToolbar = () => (
  <div role="toolbar" aria-label="Context toolbar" className="absolute left-[889px] top-[276px] flex w-[394px] flex-col border-2 border-[#c3c1c5] bg-[#fcfafd] pb-1 pl-1 pt-[3px]">
    <div className="flex">
      <Cell label="Open part"><Open /></Cell>
      <span className="flex w-[17px] items-center justify-center"><Caret /></span>
      <Cell label="Make independent"><Svg><path d="m2 17 12-13 6 1 2 4-13 9z" fill="#ddd" strokeWidth="1.600" /><path d="M3 20c-3-6 4-9 8-3" strokeWidth="2" /><path d="M17 12v10M12 17h10" stroke="#4b9a2f" strokeWidth="3" /></Svg></Cell>
      <Cell label="Component preview"><Svg><path d="M1 2h8l2 3h12v18H1z" fill="#ddd" strokeWidth="1.800" /><path d="m5 9 5 3-3 8M12 19l8-11M13 9h8v5" stroke="#444" strokeWidth="1.800" /><path d="m12 13 6 2-3 5-5-2z" fill="#e0c353" /></Svg></Cell>
      <Cell label="Edit part"><Svg><path d="M1 10 6 4l9-2 7 5v7l-9 6z" fill="#efd98a" stroke="#b0924a" /><path d="m9 6 6-3 6 3v6l-6 3-6-3z" fill="#5f9bb5" stroke="#2c6684" /><path d="m19 11 3 3-8 8-4 1 1-4z" fill="#eec357" stroke="#77582a" /></Svg></Cell>
      <Cell label="Hide components"><Svg><path d="m8 12 8-6 6 3v6l-8 3z" fill="#ececec" stroke="#d0d0d0" /><path d="m2 4 19 15" stroke="#4c4c4c" strokeWidth="2.400" /></Svg></Cell>
      <Cell label="Change transparency"><Svg><path d="m5 8 6-6 8 1 4 8-5 8-8-2z" fill="#f3efc3" stroke="#dcd8aa" /><path d="M1 16c4-5 11-5 14 0-3 4-11 4-14 0z" fill="#ccc" stroke="#777" /><circle cx="8" cy="16" r="3" fill="#333" stroke="none" /></Svg></Cell>
      <Cell label="Suppress"><Svg><path d="M4 2v17" stroke="#333" strokeWidth="2" /><path d="m0 16 4 6 4-6z" fill="#333" stroke="none" /><path d="m11 4 5-3 6 2v6l-5 3-6-2z" fill="#3f86a6" stroke="#2c6684" /><path d="m13 15 4-2 5 2v6l-4 2-5-2z" fill="#eee" stroke="#aaa" /></Svg></Cell>
      <Cell label="Mate" boxed><Clip /></Cell>
      <Cell label="View mates"><Svg><path d="M19 17 9 4C6 0 1 4 4 8l5 6M10 9l9 11c3 2 5-2 3-4L14 5" stroke="#777" strokeWidth="1.700" /><path d="M1 17c4-5 12-5 15 0-3 5-12 5-15 0z" fill="#bbb" stroke="#666" /><circle cx="8" cy="17" r="3.500" fill="#333" stroke="none" /></Svg></Cell>
      <Cell label="Component properties"><List /></Cell>
    </div>
    <div className="flex">
      <Cell label="Edit feature"><Svg><path d="M12 2h11v19H12z" fill="#ddd" /><path d="m1 9 5-4h11v13l-6 4-10-4z" fill="#5daac7" stroke="#2c6684" /><path d="m1 9 10 2 6-6M11 11v11" stroke="#2c6684" /><path d="m19 7 4 3-9 10-4 2 1-5z" fill="#eec357" stroke="#77582a" /></Svg></Cell>
      <Cell label="Edit sketch"><Svg><path d="M22 2H2v20h20" stroke="#3d7c9c" strokeWidth="2" /><path d="m18 4 4 3-9 11-5 2 1-5z" fill="#eec357" stroke="#444" /><path d="m6 16 6-8" stroke="#444" /></Svg></Cell>
      <Cell label="Appearances"><BallPencil /></Cell>
      <span className="flex w-[17px] items-center justify-center"><Caret /></span>
      <Cell label="Copy appearance"><BallPencil dark /></Cell>
    </div>
    <div className="flex">
      <Cell label="Select other"><Svg><path d="m8 5 5-3h10v12l-5 4H8z" fill="#c9d3d8" strokeWidth="1.600" /><path d="m1 9 4-3h9v12l-4 2-9-2z" fill="#e6e6e6" strokeWidth="1.600" /><path d="M11 8v13l3-3 3 5 2-1-2-5h4z" fill="#fff" /></Svg></Cell>
      <Cell label="Sketch"><Svg><path d="M22 2H9L3 8v13h19" stroke="#4e8aa5" strokeWidth="1.800" /><path d="M4 0v8M0 4h8M1 1l6 6M7 1 1 7" stroke="#e0954b" strokeWidth="1.500" /></Svg></Cell>
      <Cell label="Zoom to selection"><Magnifier /></Cell>
      <Cell label="Preview window"><WinPart /></Cell>
      <Cell label="Normal to"><Svg><path d="m1 19 8-5 14 3-8 5z" fill="#5daac7" stroke="#2c6684" /><path d="M12 18V3" stroke="#333" strokeWidth="2" /><path d="m9 5 3-5 3 5z" fill="#333" stroke="none" /></Svg></Cell>
      <Cell label="Delete face"><Cube face="top" /></Cell>
      <Cell label="Move face"><Cube face="left" /></Cell>
    </div>
  </div>
);

const MATES = [
  ["Coincident", <MateLines />],
  ["Parallel", <MateLines />],
  ["Perpendicular", <MateLines />],
  ["Angle", <Svg><path d="M3 1v20h20" stroke="#4d7c75" strokeWidth="2.200" /><path d="M4 8c7-2 12 2 13 11" stroke="#333" strokeWidth="2" /><path d="m3 8 6-4v8zM13 15l8-1-3 7z" fill="#333" stroke="none" /><path d="M17 3h4v4h-4z" /></Svg>],
  ["Tangent", <MateLines />],
  ["Distance", <Svg><path d="M4 2v20M20 2v20" stroke="#5f8089" strokeWidth="2.400" /><path d="M7 12h10" stroke="#333" strokeWidth="2" /><path d="m5 12 5-4v8zM19 12l-5-4v8z" fill="#333" stroke="none" /></Svg>],
  ["Lock", <MateLines />],
  ["Concentric", <Svg><circle cx="12" cy="12" r="10.500" stroke="#4e8aa5" strokeWidth="1.800" /><circle cx="12" cy="12" r="5.500" stroke="#4e8aa5" strokeWidth="1.800" /></Svg>],
];

const HollowArrow = ({ down }) => (
  <Svg className="size-5">
    {down ? (
      <path d="M3 3h6v9h5V8l8 7-8 7v-4H3z" fill="#f4f4f4" stroke="#aaa" strokeWidth="1.800" />
    ) : (
      <path d="M3 21V8h11V3l8 8-8 7v-5H9v8z" fill="#f4f4f4" stroke="#777" strokeWidth="1.800" />
    )}
  </Svg>
);

const MateBar = () => (
  <div role="toolbar" aria-label="Quick mates" className="absolute left-[867px] top-[400px] flex items-center">
    <HollowArrow />
    <div className="ml-1 flex gap-[3px] bg-[#e4e2e7] p-px">
      {MATES.map(([label, icon]) => (
        <button type="button" key={label} aria-label={label} className="flex h-[34px] w-[34px] items-center justify-center bg-[#fbfbfe]">{icon}</button>
      ))}
    </div>
    <button type="button" aria-label="More mates" className="ml-2.5">
      <svg viewBox="0 0 10 16" className="h-4 w-2.5" aria-hidden="true"><path d="m1 0 8 8-8 8z" fill="#555" /></svg>
    </button>
  </div>
);

const Chevron = () => (
  <svg viewBox="0 0 12 34" className="h-[34px] w-3 shrink-0" aria-hidden="true">
    <path d="m0 0 11 17L0 34" fill="none" stroke="#c9c7cc" strokeWidth="1.200" />
  </svg>
);

const Breadcrumbs = () => (
  <nav aria-label="Selection breadcrumbs" className="absolute left-[764px] top-[443px] flex h-9 items-center border border-[#cbc9ce] bg-[#fcfafd]/85 pl-4 text-[15px] text-[#444]">
    {[<Asm className="size-6" />, <Asm className="size-6" />, <Part className="size-6" />, <BlueCube />].map((icon, i) => (
      <button type="button" key={i} aria-label={`Breadcrumb ${i + 1}`} className="flex w-[42px] items-center gap-[3px]">
        {icon}
        <Chevron />
      </button>
    ))}
    <button type="button" className="flex items-center">
      <Svg><path d="m10 3 8-2 5 3v16l-5 2-5-2" fill="#eee" strokeWidth="1.600" /><path d="m1 8 5-3 7 2 4-2v12l-4 2-6 1-6-2z" fill="#5daac7" stroke="#2c6684" /><path d="M7 8v11M13 7v12" stroke="#2c6684" /></Svg>
      <span className="ml-1.5 w-[101px] whitespace-nowrap pt-0.5 text-left">Boss-Extrude1</span>
    </button>
    <button type="button" aria-label="Face" className="h-full w-[60px]">
      <svg viewBox="0 0 60 34" className="h-full w-full" preserveAspectRatio="none" aria-hidden="true">
        <path d="M0 0h60v34H0l13-17z" fill="#abcbe9" stroke="#8fb3d6" />
        <path d="M21 8h17v17H21z" fill="#3f87a8" stroke="#4c99ba" strokeWidth="2" />
      </svg>
    </button>
  </nav>
);

const SketchTag = () => (
  <div className="absolute left-[1004px] top-[485px] flex items-center text-[15px] text-[#444]">
    <HollowArrow down />
    <button type="button" className="ml-1 flex h-9 items-center border-2 border-[#e2e0e5] bg-[#fdfcfe] pl-1 pr-px">
      <Svg><path d="M22 1H6L2 6v11l4 5h16" stroke="#999" /></Svg>
      <span className="ml-1 pt-0.5">Sketch1</span>
    </button>
  </div>
);

const Viewport = () => (
  <main className="relative min-w-0 flex-1 overflow-hidden bg-white">
    <button type="button" aria-label="Collapse panel" className="absolute -left-px top-[372px] flex h-[58px] w-[15px] items-center justify-center border border-l-0 border-[#c4c2c6] bg-[#fbf9fc] pr-1">
      <span className="size-2 rounded-full border-2 border-[#bbb]" />
    </button>
    <Scooter />
    <Triad />
    <span className="absolute bottom-px left-3 font-['Lato',sans-serif] text-[22px] font-medium leading-6 text-[#333]">*Isometric</span>
    <ContextToolbar />
    <MateBar />
    <Breadcrumbs />
    <SketchTag />
    <svg viewBox="0 0 36 50" className="absolute left-[1200px] top-[309px] h-[50px] w-9" aria-hidden="true">
      <path d="M3 4v35l8-8 7 14 6-3-6-12h12z" fill="#fff" stroke="#444" strokeWidth="2.500" />
    </svg>
  </main>
);

/* ---------- task pane ---------- */

const TASKS = [
  ["3DEXPERIENCE", <Svg><path d="M1 3h21v14H1z" fill="#d9dfe2" strokeWidth="1.600" /><path d="M4 6h15v8H4z" fill="#6fa3ba" stroke="none" /><path d="m9 14 4-4 5 3 5 4-2 5-5 1-7-5z" fill="#e7c43c" stroke="#8c7420" /></Svg>],
  ["Design Library", <Svg><path d="m3 6 8-4 10 3v13l-9 5-9-4z" fill="#ddd" strokeWidth="1.800" /><path d="m3 6 9 3 9-4M12 9v14M7 8v13M16 7v14" strokeWidth="1.800" /></Svg>],
  ["File Explorer", <Svg><path d="M1 22V3h7l2 3h8v3" fill="#e9e9e9" strokeWidth="1.800" /><path d="m1 22 6-13h16l-5 13z" fill="#f4f4f4" strokeWidth="1.800" /></Svg>],
  ["View Palette", <Svg><path d="M1 3h22v18H1z" fill="#c9a944" strokeWidth="1.600" /><path d="m4 9 4-2 4 3-4 4zM14 9l4-2 3 3-3 3z" fill="#fff" stroke="none" /><path d="M1 16h16" stroke="#f4e6a8" /><path d="M18 13h5v10h-5z" fill="#eee" /></Svg>],
  ["Appearances", <Ball />],
  ["Custom Properties", <Svg><path d="M1 2h22v20H1z" fill="#ddd" strokeWidth="1.600" /><path d="M1 2h22v4H1zM1 6h6v16H1z" fill="#3f86a6" stroke="#2c6684" /><path d="M10 10h11M10 14h11" stroke="#bbb" /></Svg>],
  ["Resources", <Home />],
  ["Forum", <Svg><path d="M11 8h12v11h-4v4l-4-4h-4z" fill="#eee" strokeWidth="1.600" /><path d="M1 3c4-2 11-2 14 0v10H9l-4 4v-4H1z" fill="#3f86a6" stroke="#2c6684" /></Svg>],
];

const TaskPane = () => (
  <aside className="w-[35px] shrink-0 bg-white pt-[35px]">
    {TASKS.map(([label, icon]) => (
      <button type="button" key={label} aria-label={label} className={`flex h-9 w-full items-center justify-center border-l-2 border-t border-[#b5b4b7] pl-1 last:border-b ${label === "Resources" ? "bg-white" : "bg-[#d6d5d8]"}`}>
        {icon}
      </button>
    ))}
  </aside>
);

/* ---------- bottom ---------- */

const NAV = [
  ["First", "M5 4v12M16 4 8 10l8 6z"],
  ["Previous", "m14 4-8 6 8 6z"],
  ["Next", "m6 4 8 6-8 6z"],
  ["Last", "M15 4v12M4 4l8 6-8 6z"],
];

const BottomTabs = () => (
  <div className="flex h-[26px] shrink-0 border-y border-[#bfbdc1] bg-[#fbf9fc] text-lg">
    <div className="flex bg-[#9491ae]">
      {NAV.map(([label, d]) => (
        <button type="button" key={label} aria-label={label} className="flex w-6 items-center justify-center border border-[#827f9e] bg-[#9f9cba]">
          <svg viewBox="0 0 20 20" className="size-3.5" aria-hidden="true"><path d={d} fill="#827f9d" stroke="#827f9d" /></svg>
        </button>
      ))}
    </div>
    <div role="tablist" className="flex leading-6">
      <button type="button" role="tab" aria-selected="true" className="w-[91px] bg-white text-center font-bold leading-6 text-[#222]">Model</button>
      <button type="button" role="tab" aria-selected="false" className="w-[173px] border-l border-r-2 border-[#bfbdc1] bg-[#d9d8da] pl-[15px] text-left leading-6 text-[#555]">Motion Study 1</button>
    </div>
  </div>
);

const StatusBar = () => (
  <footer className="flex h-[27px] shrink-0 items-center border-b border-[#222] bg-[#fcfafd] text-[17px] text-[#555]">
    <span className="pt-0.5">View Mates</span>
    <span className="ml-auto"><Svg className="size-5"><path d="m2 6 7-4 8 2v8l-7 4-8-3z" fill="#e9e9e9" strokeWidth="1.600" /><circle cx="16" cy="15" r="5" fill="#ddd" strokeWidth="1.800" /></Svg></span>
  </footer>
);

export default function App() {
  return (
    <div className="flex h-screen flex-col overflow-hidden bg-white font-['Noto_Sans',sans-serif]">
      <TitleBar />
      <Ribbon />
      <TabRow />
      <div className="flex min-h-0 flex-1">
        <FeaturePanel />
        <Viewport />
        <TaskPane />
      </div>
      <BottomTabs />
      <StatusBar />
    </div>
  );
}
